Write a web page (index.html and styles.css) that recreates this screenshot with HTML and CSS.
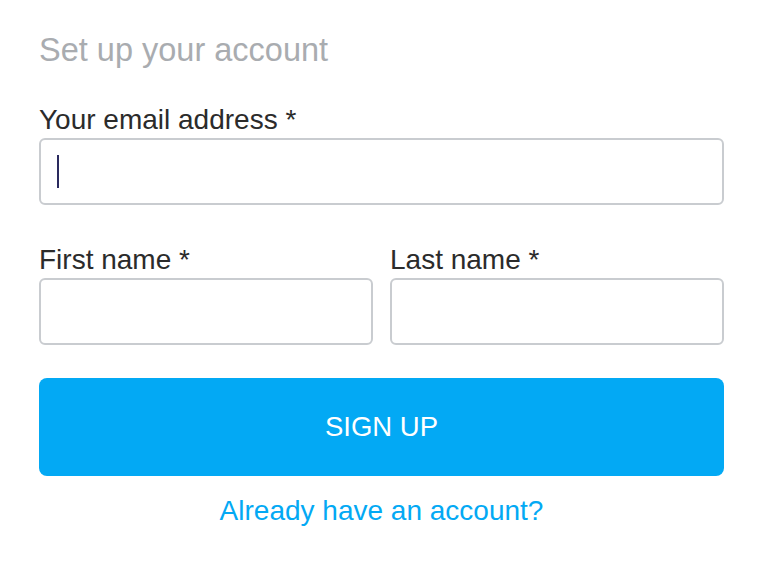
FILE: index.html
```html
<!DOCTYPE html>
<html lang="en">
<head>
    <meta charset="UTF-8">
    <meta name="viewport" content="width=device-width, initial-scale=1.0">
    <title>Sign up</title>
    <link rel="stylesheet" href="styles.css">
</head>
<body>
    <form class="signup">
        <h2 class="title">Set up your account</h2>

        <div class="form-group">
            <label for="email">Your email address *</label>
            <div class="field">
                <input type="email" id="email">
                <span class="caret"></span>
            </div>
        </div>

        <div class="name-row">
            <div class="form-group">
                <label for="first">First name *</label>
                <div class="field">
                    <input type="text" id="first">
                </div>
            </div>
            <div class="form-group">
                <label for="last">Last name *</label>
                <div class="field">
                    <input type="text" id="last">
                </div>
            </div>
        </div>

        <button type="button" class="submit">SIGN UP</button>
        <a href="#" class="login-link">Already have an account?</a>
    </form>
</body>
</html>
```

FILE: styles.css
```css
body {
    margin: 0;
    background-color: #ffffff;
    font-family: "Liberation Sans", Arial, sans-serif;
    color: #2b2b2b;
}

.signup {
    width: 685px;
    margin-left: 39px;
    padding-top: 32px;
    display: flex;
    flex-direction: column;
}

.title {
    margin: 0 0 36px;
    font-size: 32.5px;
    line-height: 36px;
    font-weight: normal;
    color: #a9acb0;
}

.form-group {
    display: flex;
    flex-direction: column;
    margin-bottom: 39px;
}

label {
    font-size: 28px;
    line-height: 32px;
    margin-bottom: 2px;
}

.field {
    position: relative;
}

input {
    width: 100%;
    height: 67px;
    box-sizing: border-box;
    border: 2px solid #c9ccd0;
    border-radius: 6px;
    padding: 0 16px;
    font-family: inherit;
    font-size: 27px;
    outline: none;
    background-color: #fff;
}

.caret {
    position: absolute;
    left: 18px;
    top: 17px;
    width: 2px;
    height: 33px;
    background-color: #2a2a5e;
}

.name-row {
    display: grid;
    grid-template-columns: 1fr 1fr;
    gap: 17px;
}

.name-row .form-group {
    margin-bottom: 33px;
}

.submit {
    height: 98px;
    border: none;
    border-radius: 8px;
    background-color: #03a9f4;
    color: #ffffff;
    font-family: inherit;
    font-size: 27.5px;
    cursor: pointer;
}

.login-link {
    margin-top: 19px;
    align-self: center;
    font-size: 28px;
    line-height: 32px;
    color: #03a9f4;
    text-decoration: none;
}
```
